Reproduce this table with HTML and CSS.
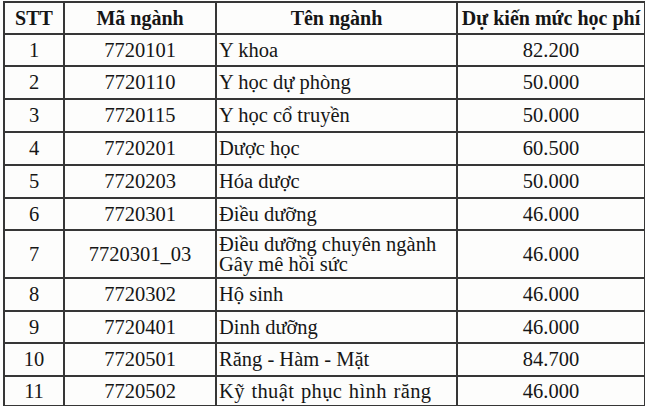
FILE: index.html
```html
<!DOCTYPE html>
<html lang="vi">
<head>
<meta charset="utf-8">
<link rel="stylesheet" href="styles.css">
</head>
<body>
<table class="fees">
  <colgroup>
    <col class="c-stt">
    <col class="c-code">
    <col class="c-name">
    <col class="c-fee">
  </colgroup>
  <thead>
    <tr class="r-head">
      <th>STT</th>
      <th>Mã ngành</th>
      <th>Tên ngành</th>
      <th>Dự kiến mức học phí</th>
    </tr>
  </thead>
  <tbody>
    <tr class="r32"><td>1</td><td>7720101</td><td class="name">Y khoa</td><td>82.200</td></tr>
    <tr class="r33"><td>2</td><td>7720110</td><td class="name">Y học dự phòng</td><td>50.000</td></tr>
    <tr class="r33"><td>3</td><td>7720115</td><td class="name">Y học cổ truyền</td><td>50.000</td></tr>
    <tr class="r33"><td>4</td><td>7720201</td><td class="name">Dược học</td><td>60.500</td></tr>
    <tr class="r33"><td>5</td><td>7720203</td><td class="name">Hóa dược</td><td>50.000</td></tr>
    <tr class="r32"><td>6</td><td>7720301</td><td class="name">Điều dưỡng</td><td>46.000</td></tr>
    <tr class="r48"><td>7</td><td>7720301_03</td><td class="name two">Điều dưỡng chuyên ngành<br>Gây mê hồi sức</td><td>46.000</td></tr>
    <tr class="r33"><td>8</td><td>7720302</td><td class="name">Hộ sinh</td><td>46.000</td></tr>
    <tr class="r32"><td>9</td><td>7720401</td><td class="name">Dinh dưỡng</td><td>46.000</td></tr>
    <tr class="r33"><td>10</td><td>7720501</td><td class="name">Răng - Hàm - Mặt</td><td>84.700</td></tr>
    <tr class="r30"><td>11</td><td>7720502</td><td class="name wide">Kỹ thuật phục hình răng</td><td>46.000</td></tr>
  </tbody>
</table>
</body>
</html>
```

FILE: styles.css
```css
html, body {
  margin: 0;
  padding: 0;
  background: #fdfdfc;
}

body {
  padding: 1px 0 0 3px;
  font-family: "Liberation Serif", "Times New Roman", serif;
  color: #161616;
}

.fees {
  border-collapse: collapse;
  table-layout: fixed;
  width: 641px;
}

.c-stt { width: 60px; }
.c-code { width: 152px; }
.c-name { width: 241px; }
.c-fee { width: 188px; }

.fees th,
.fees td {
  border: 2px solid #363636;
  padding: 0 3px;
  text-align: center;
  vertical-align: middle;
  font-size: 20.5px;
  line-height: 21px;
  white-space: nowrap;
  overflow: hidden;
}

.fees th {
  font-weight: bold;
  font-size: 20px;
}

.fees td.name {
  text-align: left;
  padding-left: 2px;
}

.fees td.two {
  line-height: 20px;
}

.fees td.wide {
  letter-spacing: 0.4px;
  word-spacing: 1px;
}

.r-head { height: 32px; }
.r30 { height: 30px; }
.r32 { height: 32px; }
.r33 { height: 33px; }
.r48 { height: 48px; }
```
